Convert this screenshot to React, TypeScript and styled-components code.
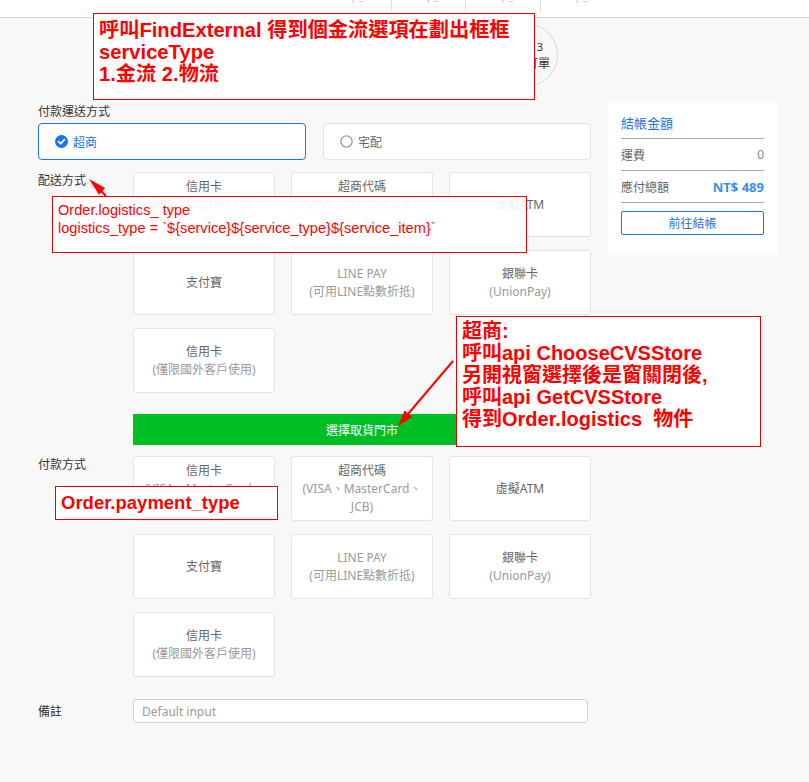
import React from 'react';
import styled, { createGlobalStyle } from 'styled-components';

const GlobalStyle = createGlobalStyle`
  html, body { margin: 0; padding: 0; background: #f8f8f8; }
  body { font-family: "Noto Sans", "Noto Sans CJK TC", sans-serif; color: #333; }
  * { box-sizing: border-box; }
`;

const BLUE = '#1a73e8';

const Page = styled.div`
  position: relative;
  width: 809px;
  min-height: 782px;
  background: #f8f8f8;
  overflow: hidden;
`;

const Header = styled.header`
  height: 18px;
  background: #fff;
  border-bottom: 1px solid #d4d4d4;
  display: flex;
  padding-left: 316px;
`;

const Tab = styled.div<{ $first?: boolean }>`
  width: 74.5px;
  height: 11px;
  border-left: ${p => (p.$first ? 'none' : '1px solid #dcdcdc')};
  display: flex;
  justify-content: center;
  align-items: flex-start;
  overflow: hidden;
`;

const TabLabel = styled.span`
  margin-top: -10px;
  font-size: 11px;
  line-height: 11px;
  color: #c4c4c4;
`;

const StepRow = styled.div`
  height: 85px;
  display: flex;
  gap: 86px;
  padding: 5px 0 0 194px;
`;

const StepCircle = styled.div`
  width: 64px;
  height: 64px;
  border-radius: 50%;
  border: 1.5px solid #d8d8d8;
  display: flex;
  flex-direction: column;
  align-items: center;
  justify-content: center;
  font-size: 11px;
  line-height: 17px;
  color: #333;
`;

const StepName = styled.span`
  font-size: 12px;
`;

const Main = styled.div`
  display: flex;
  align-items: flex-start;
  gap: 17px;
  padding-left: 38px;
`;

const LeftCol = styled.div`
  width: 553px;
  display: flex;
  flex-direction: column;
`;

const SectionTitle = styled.div`
  font-size: 12px;
  line-height: 18px;
  color: #333;
  margin-bottom: 2px;
`;

const RadioRow = styled.div`
  display: grid;
  grid-template-columns: 268px 268px;
  gap: 17px;
`;

const RadioCard = styled.div<{ $active?: boolean }>`
  height: 37px;
  background: #fff;
  border: 1px solid ${p => (p.$active ? BLUE : '#e3e3e3')};
  border-radius: 4px;
  display: flex;
  align-items: center;
  gap: 5px;
  padding-left: 16px;
  font-size: 12px;
  color: ${p => (p.$active ? BLUE : '#666')};
`;

const FieldRow = styled.div<{ $gap: number; $center?: boolean }>`
  display: flex;
  align-items: ${p => (p.$center ? 'center' : 'flex-start')};
  margin-top: ${p => p.$gap}px;
`;

const FieldLabel = styled.div`
  width: 95px;
  flex-shrink: 0;
  font-size: 12px;
  line-height: 16px;
  padding-top: 1px;
  color: #333;
`;

const CardGrid = styled.div`
  display: grid;
  grid-template-columns: repeat(3, 142px);
  grid-auto-rows: 65px;
  column-gap: 16px;
  row-gap: 13px;
`;

const OptionCard = styled.div`
  background: #fff;
  border: 1px solid #e4e4e4;
  border-radius: 3px;
  display: flex;
  flex-direction: column;
  align-items: center;
  justify-content: center;
  text-align: center;
  font-size: 12px;
  line-height: 18px;
  color: #666;
`;

const OptionLine = styled.span<{ $sub?: boolean }>`
  color: ${p => (p.$sub ? '#9a9a9a' : '#666')};
  white-space: nowrap;
`;

const GreenButton = styled.button`
  margin: 21px 0 0 95px;
  width: 458px;
  height: 31px;
  border: none;
  background: #00bf26;
  color: #fff;
  font-family: inherit;
  font-size: 12px;
`;

const NoteInput = styled.input`
  width: 455px;
  height: 24px;
  border: 1px solid #cfd3d8;
  border-radius: 3px;
  background: #fff;
  padding: 0 8px;
  font-family: inherit;
  font-size: 12px;
  &::placeholder { color: #9a9a9a; }
`;

const Summary = styled.aside`
  width: 170px;
  background: #fff;
  padding: 4px 14px 20px 13px;
  display: flex;
  flex-direction: column;
`;

const SummaryRow = styled.div`
  height: 32px;
  display: flex;
  justify-content: space-between;
  align-items: center;
  border-bottom: 1px solid #a8a8a8;
  font-size: 12px;
  color: #666;
`;

const SummaryTitle = styled.span`
  font-size: 13px;
  color: ${BLUE};
`;

const Amount = styled.span<{ $strong?: boolean }>`
  font-size: ${p => (p.$strong ? 13 : 12)}px;
  font-weight: ${p => (p.$strong ? 700 : 400)};
  color: ${p => (p.$strong ? '#3b8eea' : '#888')};
`;

const CheckoutButton = styled.button`
  margin-top: 8px;
  height: 24px;
  width: 100%;
  background: #fff;
  border: 1px solid ${BLUE};
  border-radius: 2px;
  color: ${BLUE};
  font-family: inherit;
  font-size: 12px;
`;

const Note = styled.div<{ $x: number; $y: number; $w: number; $h: number; $size: number; $bold?: boolean; $pt: number; $lh: number; $alpha?: number }>`
  position: absolute;
  left: ${p => p.$x}px;
  top: ${p => p.$y}px;
  width: ${p => p.$w}px;
  height: ${p => p.$h}px;
  padding: ${p => p.$pt}px 5px 0 5px;
  border: 1px solid #e60000;
  background: rgba(255, 255, 255, ${p => p.$alpha ?? 1});
  color: #ff0000;
  font-family: "Liberation Sans", "Noto Sans CJK TC", sans-serif;
  font-size: ${p => p.$size}px;
  font-weight: ${p => (p.$bold ? 700 : 400)};
  line-height: ${p => p.$lh}px;
  white-space: pre;
`;

const ArrowLayer = styled.svg`
  position: absolute;
  left: 0;
  top: 0;
  pointer-events: none;
`;

const CheckIcon = () => (
  <svg width="13" height="13" viewBox="0 0 13 13">
    <circle cx="6.5" cy="6.5" r="6.5" fill={BLUE} />
    <path d="M3.6 6.7 L5.7 8.7 L9.5 4.6" fill="none" stroke="#fff" strokeWidth="1.7" strokeLinecap="round" strokeLinejoin="round" />
  </svg>
);

const RadioIcon = () => (
  <svg width="13" height="13" viewBox="0 0 13 13">
    <circle cx="6.5" cy="6.5" r="5.6" fill="#fff" stroke="#999" strokeWidth="1.3" />
  </svg>
);

type Opt = { lines: string[] };

const deliveryOptions: Opt[] = [
  { lines: ['信用卡', '(VISA、MasterCard、', 'JCB)'] },
  { lines: ['超商代碼', '(VISA、MasterCard、', 'JCB)'] },
  { lines: ['虛擬ATM'] },
  { lines: ['支付寶'] },
  { lines: ['LINE PAY', '(可用LINE點數折抵)'] },
  { lines: ['銀聯卡', '(UnionPay)'] },
  { lines: ['信用卡', '(僅限國外客戶使用)'] },
];

const Options = ({ items }: { items: Opt[] }) => (
  <CardGrid>
    {items.map((o, i) => (
      <OptionCard key={i}>
        {o.lines.map((l, j) => (
          <OptionLine key={j} $sub={j > 0 || l === 'LINE PAY'}>{l}</OptionLine>
        ))}
      </OptionCard>
    ))}
  </CardGrid>
);

export default function App() {
  return (
    <Page>
      <GlobalStyle />
      <Header>
        <Tab $first><TabLabel>step_1</TabLabel></Tab>
        <Tab><TabLabel>step_2</TabLabel></Tab>
        <Tab><TabLabel>step_3</TabLabel></Tab>
        <Tab><TabLabel>step_4</TabLabel></Tab>
      </Header>
      <StepRow>
        <StepCircle><span>STEP 1</span><StepName>購物車</StepName></StepCircle>
        <StepCircle><span>STEP 2</span><StepName>填寫資料</StepName></StepCircle>
        <StepCircle><span>STEP 3</span><StepName>確認訂單</StepName></StepCircle>
      </StepRow>
      <Main>
        <LeftCol>
          <SectionTitle>付款運送方式</SectionTitle>
          <RadioRow>
            <RadioCard $active><CheckIcon />超商</RadioCard>
            <RadioCard><RadioIcon />宅配</RadioCard>
          </RadioRow>
          <FieldRow $gap={12}>
            <FieldLabel>配送方式</FieldLabel>
            <Options items={deliveryOptions} />
          </FieldRow>
          <GreenButton>選擇取貨門市</GreenButton>
          <FieldRow $gap={11}>
            <FieldLabel>付款方式</FieldLabel>
            <Options items={deliveryOptions} />
          </FieldRow>
          <FieldRow $gap={22} $center>
            <FieldLabel>備註</FieldLabel>
            <NoteInput placeholder="Default input" />
          </FieldRow>
        </LeftCol>
        <Summary>
          <SummaryRow><SummaryTitle>結帳金額</SummaryTitle></SummaryRow>
          <SummaryRow><span>運費</span><Amount>0</Amount></SummaryRow>
          <SummaryRow><span>應付總額</span><Amount $strong>NT$ 489</Amount></SummaryRow>
          <CheckoutButton>前往結帳</CheckoutButton>
        </Summary>
      </Main>

      <Note $x={93} $y={13} $w={442} $h={87} $size={20.2} $bold $pt={5} $lh={22}>
        {'呼叫FindExternal 得到個金流選項在劃出框框\nserviceType\n1.金流 2.物流'}
      </Note>
      <Note $x={52} $y={196} $w={475} $h={57} $size={14.6} $pt={4} $lh={18} $alpha={0.9}>
        {'Order.logistics_ type\nlogistics_type = `${service}${service_type}${service_item}`'}
      </Note>
      <Note $x={55} $y={486} $w={223} $h={34} $size={18.5} $bold $pt={5} $lh={22}>
        {'Order.payment_type'}
      </Note>
      <Note $x={456} $y={316} $w={305} $h={131} $size={20} $bold $pt={3} $lh={22}>
        {'超商:\n呼叫api ChooseCVSStore\n另開視窗選擇後是窗關閉後,\n呼叫api GetCVSStore\n得到Order.logistics  物件'}
      </Note>

      <ArrowLayer width="809" height="782" viewBox="0 0 809 782">
        <line x1="106" y1="196" x2="101" y2="191" stroke="#f00" strokeWidth="2" />
        <polygon points="89,179 105.2,188.1 99,194.7" fill="#f00" />
        <line x1="453" y1="361" x2="408" y2="414" stroke="#f00" strokeWidth="2" />
        <polygon points="398,426 412.2,417 404.6,410.6" fill="#f00" />
      </ArrowLayer>
    </Page>
  );
}
